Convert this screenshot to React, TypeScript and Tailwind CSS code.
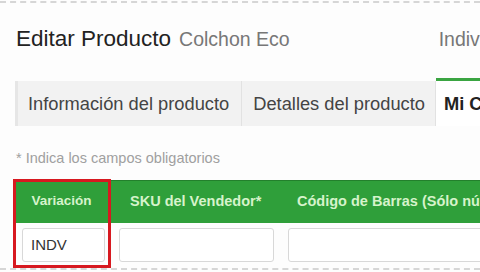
// App.tsx
// Edit product screen: title, tab strip, and the variations table header.

const TABS = [
  { label: "Información del producto", active: false },
  { label: "Detalles del producto", active: false },
  { label: "Mi Catálogo", active: true },
];

export default function App() {
  return (
    <div
      className="w-[480px] h-[272px] overflow-hidden bg-[#fdfdfd] flex flex-col"
      style={{ fontFamily: '"Liberation Sans", Arial, sans-serif' }}
    >
      {/* top dashed rule */}
      <div className="h-[3px] border-b-2 border-dashed border-[#d6d6d6]" />

      {/* title row */}
      <div className="flex items-baseline pl-4 pt-[25px] h-[50px] leading-none whitespace-nowrap">
        <span className="text-[22.5px] text-[#222]">Editar Producto</span>
        <span className="ml-[8px] text-[19.5px] text-[#777]">Colchon Eco</span>
        <span className="ml-[149px] text-[19.5px] text-[#777]">Individual</span>
      </div>

      {/* tab strip */}
      <div className="flex items-end mt-[25px] ml-[15px] h-[48px] whitespace-nowrap text-[18.3px]">
        {TABS.map((t, i) => (
          <div
            key={t.label}
            className={
              t.active
                ? "shrink-0 flex items-center h-[48px] pl-[8px] pr-4 bg-white border-t-[3px] border-[#3aa542] font-bold text-[#222]"
                : i === 0
                ? "shrink-0 flex items-center h-[45px] pl-[10px] pr-[12px] bg-[#f2f2f2] border-l-[3px] border-[#e6e6e6] border-r border-r-[#e2e2e2] text-[#444]"
                : "shrink-0 flex items-center h-[45px] pl-[11px] pr-[10px] bg-[#f2f2f2] border-r border-[#e2e2e2] text-[#444]"
            }
          >
            {t.label}
          </div>
        ))}
      </div>

      {/* required note */}
      <div className="pl-4 mt-[25px] leading-none text-[14.5px] text-[#a0a0a0]">
        * Indica los campos obligatorios
      </div>

      {/* variations table */}
      <div className="relative mt-[14px] ml-[13px] whitespace-nowrap">
        <div className="flex h-[43px] bg-[#2f9f3a] border-t border-[#23802c] text-[#d6f3cb] font-bold text-[14.5px] items-center">
          <div className="shrink-0 w-[97px] text-center text-[13.5px]">Variación</div>
          <div className="shrink-0 w-[172px] pl-[20px]">SKU del Vendedor*</div>
          <div className="shrink-0 pl-[15px]">Código de Barras (Sólo números)</div>
        </div>
        <div className="flex h-[45px] items-center">
          <div className="shrink-0 w-[97px] pl-[9px]">
            <div className="w-[83px] h-[34px] border border-[#d8d8d8] rounded-[3px] bg-white flex items-center pl-[8px] text-[15px] text-[#333]">
              INDV
            </div>
          </div>
          <div className="shrink-0 w-[172px] pl-[9px]">
            <div className="w-[155px] h-[34px] border border-[#d8d8d8] rounded-[3px] bg-white" />
          </div>
          <div className="shrink-0 pl-[6px]">
            <div className="w-[220px] h-[34px] border border-[#d8d8d8] rounded-[3px] bg-white" />
          </div>
        </div>
        {/* red highlight around the Variación column */}
        <div className="absolute left-0 -top-[1px] w-[98px] h-[89px] border-[3px] border-[#d71920]" />
      </div>

      {/* bottom dashed rule */}
      <div className="border-t-2 border-dashed border-[#d6d6d6]" />
    </div>
  );
}
